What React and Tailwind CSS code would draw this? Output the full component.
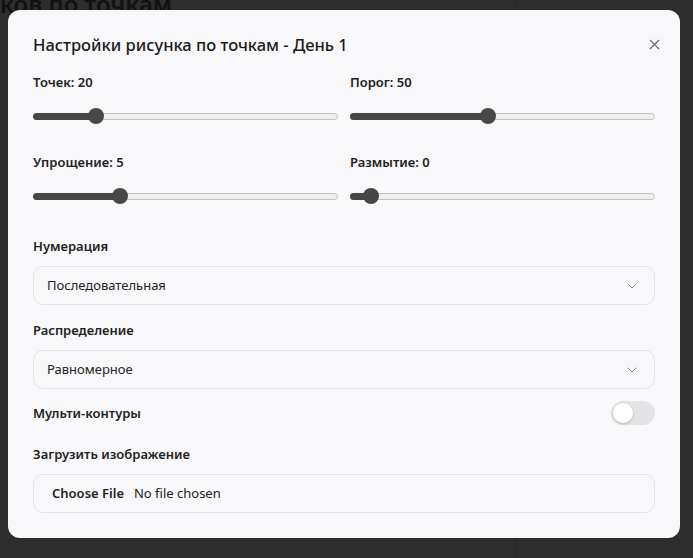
import { ChevronDown, X } from "lucide-react";

const sliders = [
  { label: "Точек: 20", pos: 63 },
  { label: "Порог: 50", pos: 138 },
  { label: "Упрощение: 5", pos: 87 },
  { label: "Размытие: 0", pos: 21 },
];

function Slider({ label, pos }) {
  return (
    <div>
      <div className="text-[13px] font-semibold leading-5 text-[#222]">{label}</div>
      <div className="relative mt-4 h-4">
        <div className="absolute left-0 right-0 top-[5px] h-[7px] rounded-full border border-[#c2c2c2] bg-[#efefef]" />
        <div className="absolute left-0 top-[5px] h-[7px] rounded-full bg-[#474747]" style={{ width: pos }} />
        <div className="absolute top-0 h-4 w-4 rounded-full bg-[#474747]" style={{ left: pos - 8 }} />
      </div>
    </div>
  );
}

function Select({ value }) {
  return (
    <div className="mt-[10px] flex h-[39px] items-center justify-between rounded-[10px] border border-[#e4e4e7] bg-[#f8f8fa] pl-[13px] pr-[14px]">
      <span className="text-[13px] text-[#222]">{value}</span>
      <ChevronDown className="h-4 w-4 text-[#8a8a8a]" strokeWidth={1.5} />
    </div>
  );
}

export default function App() {
  return (
    <div className="relative h-[558px] w-[693px] overflow-hidden bg-[#2d2d2d] font-['Noto_Sans',sans-serif]">
      {/* page behind the overlay */}
      <div className="flex h-full">
        <div className="w-[517px] border-r border-[#262626]">
          <div className="-mt-[12px] text-[24px] font-semibold leading-8 text-[#111]">ков по точкам</div>
        </div>
        <div className="flex-1" />
      </div>

      <div className="absolute left-[8px] top-[10px] w-[672px] rounded-[12px] bg-[#f8f8fa] px-[25px] pb-[25px] pt-[22px]">
        <button className="absolute right-[17px] top-[26px] text-[#666]">
          <X className="h-[17px] w-[17px]" strokeWidth={1.5} />
        </button>
        <h2 className="text-[16.5px] font-medium leading-[26px] text-[#1a1a1a]">Настройки рисунка по точкам - День 1</h2>

        <div className="mt-[14px] grid grid-cols-2 gap-x-3 gap-y-7">
          {sliders.map((s) => (
            <Slider key={s.label} {...s} />
          ))}
        </div>

        <div className="mt-8 text-[13px] font-semibold leading-5 text-[#222]">Нумерация</div>
        <Select value="Последовательная" />

        <div className="mt-[15px] text-[13px] font-semibold leading-5 text-[#222]">Распределение</div>
        <Select value="Равномерное" />

        <div className="mt-[12px] flex items-center justify-between">
          <span className="text-[13px] font-semibold leading-5 text-[#222]">Мульти-контуры</span>
          <div className="flex h-6 w-11 items-center rounded-full bg-[#e4e4e7] p-[2px]">
            <div className="h-5 w-5 rounded-full bg-white shadow-[0_1px_3px_rgba(0,0,0,0.2)]" />
          </div>
        </div>

        <div className="mt-[19px] text-[13px] font-semibold leading-5 text-[#222]">Загрузить изображение</div>
        <div className="mt-[10px] flex h-[39px] items-center rounded-[10px] border border-[#e4e4e7] bg-[#f8f8fa] pl-[18px] text-[13px] text-[#222]">
          <span className="font-semibold">Choose File</span>
          <span className="ml-[10px]">No file chosen</span>
        </div>
      </div>
    </div>
  );
}
